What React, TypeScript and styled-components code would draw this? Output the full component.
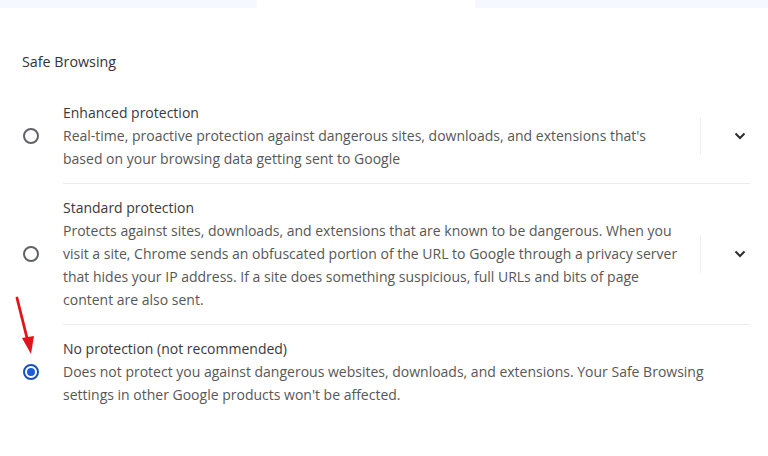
import React from "react";
import styled, { createGlobalStyle } from "styled-components";

const Global = createGlobalStyle`
  html, body { margin: 0; padding: 0; background: #ffffff; }
  body { font-family: "Open Sans", "Noto Sans", sans-serif; }
`;

const Page = styled.div`
  width: 768px;
  height: 456px;
  overflow: hidden;
  background: #fff;
`;

const TopBand = styled.div`
  display: flex;
  height: 8px;
`;

const BandSeg = styled.div<{ $w: number; $tint: boolean }>`
  width: ${(p) => p.$w}px;
  flex: ${(p) => (p.$w ? "none" : "1")};
  background: ${(p) => (p.$tint ? "#f5f8fc" : "#ffffff")};
`;

const Heading = styled.h2`
  margin: 0;
  padding: 44px 0 0 22px;
  font-size: 14.3px;
  font-weight: 500;
  color: #333;
  line-height: 20px;
`;

const List = styled.div`
  margin-top: 17px;
  display: flex;
  flex-direction: column;
`;

const Row = styled.div`
  display: flex;
  align-items: stretch;
`;

const RadioCell = styled.div`
  width: 63px;
  display: flex;
  align-items: center;
  padding-left: 23px;
  box-sizing: border-box;
  position: relative;
`;

const Radio = styled.span<{ $on: boolean }>`
  width: 16px;
  height: 16px;
  box-sizing: border-box;
  border-radius: 50%;
  border: 2px solid ${(p) => (p.$on ? "#1a4fb8" : "#5f6368")};
  display: flex;
  align-items: center;
  justify-content: center;
  &::after {
    content: "";
    width: 8px;
    height: 8px;
    border-radius: 50%;
    background: ${(p) => (p.$on ? "#1b5fd6" : "transparent")};
  }
`;

const Body = styled.div<{ $sep: boolean }>`
  width: 687px;
  display: flex;
  align-items: center;
  border-top: ${(p) => (p.$sep ? "1px solid #ececec" : "none")};
  padding: 13px 0 13px;
`;

const Texts = styled.div<{ $w: number }>`
  width: ${(p) => p.$w}px;
  font-size: 14px;
  line-height: 22.8px;
`;

const Title = styled.div`
  color: #3a3a3a;
`;

const Desc = styled.div`
  color: #575757;
`;

const Expand = styled.div`
  margin-left: auto;
  display: flex;
  align-items: center;
  height: 38px;
  width: 50px;
  border-left: 1px solid #f0f0f0;
  box-sizing: border-box;
  padding-left: 33px;
  color: #333;
`;

const Arrow = styled.svg`
  position: absolute;
  left: 10px;
  top: -28px;
`;

const Chevron = () => (
  <svg width="12" height="8" viewBox="0 0 12 8">
    <path d="M1.5 1.5 L6 6 L10.5 1.5" fill="none" stroke="#2d2d2d" strokeWidth="2" />
  </svg>
);

const options = [
  {
    title: "Enhanced protection",
    desc: "Real-time, proactive protection against dangerous sites, downloads, and extensions that's based on your browsing data getting sent to Google",
    on: false,
    expand: true,
  },
  {
    title: "Standard protection",
    desc: "Protects against sites, downloads, and extensions that are known to be dangerous. When you visit a site, Chrome sends an obfuscated portion of the URL to Google through a privacy server that hides your IP address. If a site does something suspicious, full URLs and bits of page content are also sent.",
    on: false,
    expand: true,
  },
  {
    title: "No protection (not recommended)",
    desc: "Does not protect you against dangerous websites, downloads, and extensions. Your Safe Browsing settings in other Google products won't be affected.",
    on: true,
    expand: false,
  },
];

export default function App() {
  return (
    <Page>
      <Global />
      <TopBand>
        <BandSeg $w={257} $tint />
        <BandSeg $w={218} $tint={false} />
        <BandSeg $w={0} $tint />
      </TopBand>
      <Heading>Safe Browsing</Heading>
      <List>
        {options.map((o, i) => (
          <Row key={o.title}>
            <RadioCell>
              {o.on && (
                <Arrow width="30" height="64" viewBox="0 0 30 64">
                  <line x1="7" y1="2" x2="18" y2="46" stroke="#e0141a" strokeWidth="2.8" strokeLinecap="round" />
                  <polygon points="12,42 24,40 21,58" fill="#e0141a" />
                </Arrow>
              )}
              <Radio $on={o.on} />
            </RadioCell>
            <Body $sep={i > 0}>
              <Texts $w={o.expand ? 618 : 660}>
                <Title>{o.title}</Title>
                <Desc>{o.desc}</Desc>
              </Texts>
              {o.expand && (
                <Expand>
                  <Chevron />
                </Expand>
              )}
            </Body>
          </Row>
        ))}
      </List>
    </Page>
  );
}
